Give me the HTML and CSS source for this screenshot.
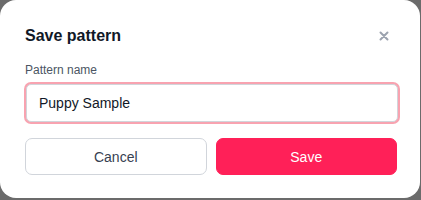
FILE: index.html
```html
<!DOCTYPE html>
<html lang="en">
<head>
  <meta charset="UTF-8">
  <meta name="viewport" content="width=device-width, initial-scale=1.0">
  <title>Save pattern</title>
  <link rel="stylesheet" href="styles.css">
</head>
<body>
  <div class="modal">
    <div class="modal-header">
      <h2>Save pattern</h2>
      <button class="close-btn" aria-label="Close">
        <svg width="10" height="10" viewBox="0 0 10 10">
          <path d="M1.5 1.5 L8.5 8.5 M8.5 1.5 L1.5 8.5" stroke="#9ca3af" stroke-width="2" stroke-linecap="round"/>
        </svg>
      </button>
    </div>
    <label class="field-label" for="patternName">Pattern name</label>
    <input type="text" id="patternName" class="text-input" value="Puppy Sample">
    <div class="actions">
      <button class="btn btn-cancel">Cancel</button>
      <button class="btn btn-save">Save</button>
    </div>
  </div>
</body>
</html>
```

FILE: styles.css
```css
* {
  margin: 0;
  padding: 0;
  box-sizing: border-box;
}

body {
  width: 421px;
  height: 200px;
  background: #6b6b6b;
  font-family: 'Liberation Sans', Arial, sans-serif;
  overflow: hidden;
}

.modal {
  width: 420px;
  height: 198px;
  background: #fff;
  border-radius: 16px;
  padding: 25px 23px 0 25px;
}

.modal-header {
  display: flex;
  justify-content: space-between;
  align-items: center;
  height: 22px;
  margin-bottom: 16px;
}

.modal-header h2 {
  font-size: 16px;
  font-weight: 700;
  color: #111827;
}

.close-btn {
  border: none;
  background: none;
  width: 10px;
  height: 10px;
  margin-right: 8px;
  display: flex;
  cursor: pointer;
}

.field-label {
  display: block;
  font-size: 12px;
  color: #4b5563;
  margin-bottom: 7px;
}

.text-input {
  display: block;
  width: 372px;
  height: 38px;
  margin-left: 1px;
  padding: 0 12px;
  font-family: inherit;
  font-size: 14px;
  color: #111827;
  border: 1px solid #d1d5db;
  border-radius: 5px;
  box-shadow: 0 0 0 2px #f8a3b0;
  outline: none;
}

.actions {
  display: flex;
  gap: 9px;
  width: 372px;
  margin-top: 16px;
}

.btn {
  flex: 1;
  height: 37px;
  border-radius: 7px;
  font-family: inherit;
  font-size: 14px;
  cursor: pointer;
}

.btn-cancel {
  background: #fff;
  border: 1px solid #d1d5db;
  color: #374151;
}

.btn-save {
  background: #ff2058;
  border: 1px solid #ff2058;
  color: #fff;
}
```
